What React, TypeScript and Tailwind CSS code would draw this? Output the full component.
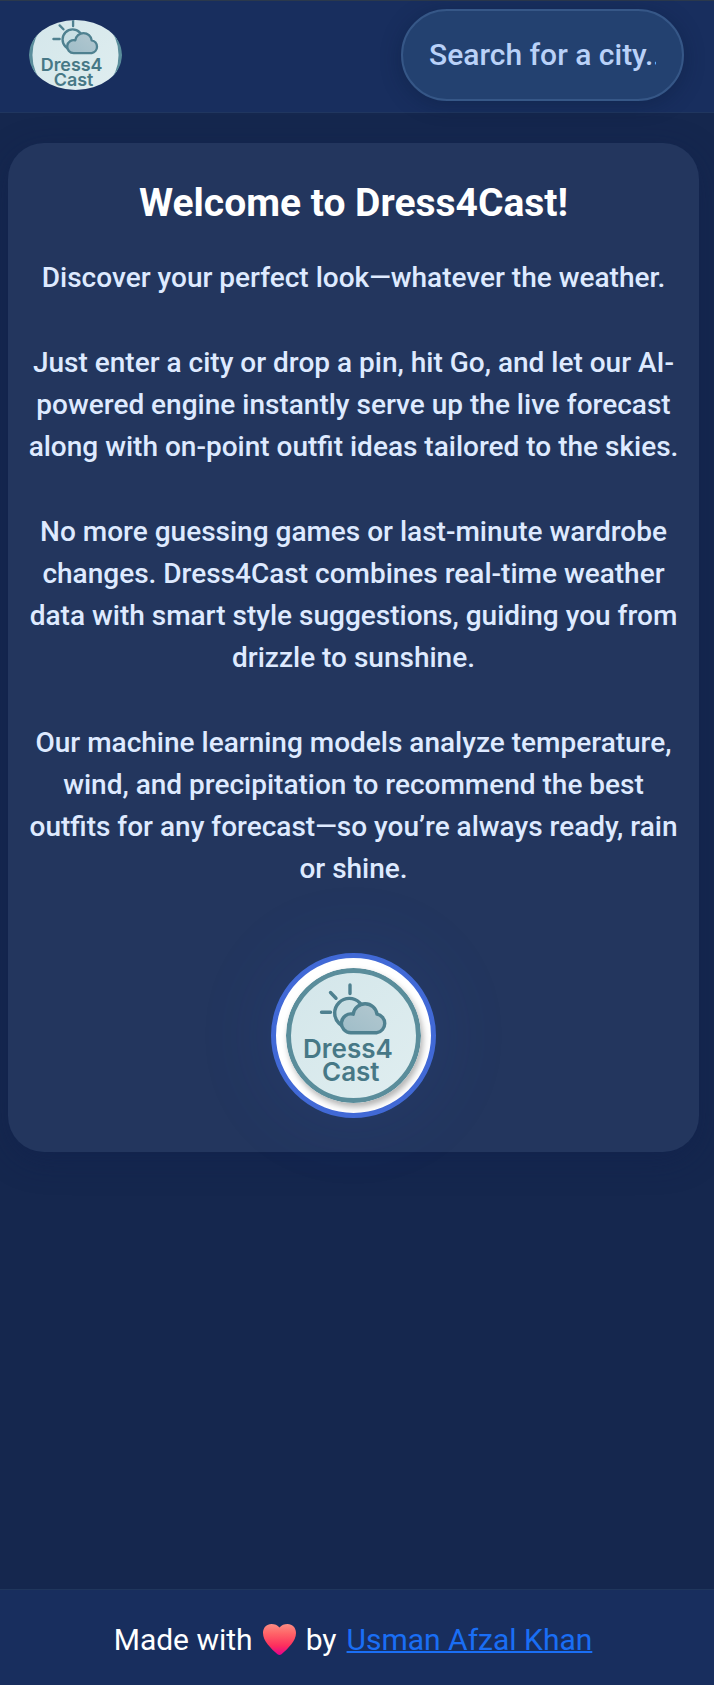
import { useId } from "react";

function Logo({ className }: { className: string }) {
  const id = useId();
  return (
    <svg viewBox="0 0 135 135" preserveAspectRatio="xMidYMid slice" className={className} role="img" aria-label="Dress4Cast">
      <defs>
        <linearGradient id={`${id}face`} x1="0" y1="0" x2="1" y2="1">
          <stop offset="0" stopColor="#d3e6ea" />
          <stop offset="1" stopColor="#e0eef0" />
        </linearGradient>
        <linearGradient id={`${id}cloud`} x1="0" y1="1" x2="1" y2="0">
          <stop offset="0" stopColor="#9fbdc8" />
          <stop offset="1" stopColor="#b3c8d0" />
        </linearGradient>
      </defs>
      <circle cx="67.5" cy="67.5" r="65" fill={`url(#${id}face)`} stroke="#5a8d9b" strokeWidth="5" />
      <g stroke="#4f8190" strokeWidth="3.4" strokeLinecap="round" strokeLinejoin="round">
        <path d="M64 17v8.500M44.500 24.500l5.500 5.700M35.500 44.300h9" fill="none" />
        <circle cx="63.300" cy="45" r="14.600" fill="#c9dfe4" />
        <path
          d="M65 64.700a9.400 9.400 0 1 1 2.200-18.500A12 12 0 0 1 91 46.200A9.400 9.400 0 0 1 91 64.700Z"
          fill={`url(#${id}cloud)`}
        />
      </g>
      <text fill="#477886" className="font-['Inter',sans-serif] text-[26px] font-semibold">
        <tspan x="17" y="90">
          Dress4
        </tspan>
        <tspan x="36" y="113">
          Cast
        </tspan>
      </text>
    </svg>
  );
}

function Heart() {
  const id = useId();
  return (
    <svg viewBox="0 0 33 31" className="h-[31px] w-[33px]" role="img" aria-label="love">
      <defs>
        <linearGradient id={id} x1="0" y1="0" x2="0" y2="1">
          <stop offset="0" stopColor="#fb8d84" />
          <stop offset="0.3" stopColor="#ff6568" />
          <stop offset="0.7" stopColor="#fd2f5d" />
          <stop offset="1" stopColor="#e6008f" />
        </linearGradient>
      </defs>
      <path
        d="M16.500 3.500C18.500 1 21.300 0 24.500 0C29.500 0 33 3.800 33 9C33 17 25 24.500 18.500 30.300Q16.500 31.700 14.500 30.300C8 24.500 0 17 0 9C0 3.800 3.500 0 8.500 0C11.700 0 14.500 1 16.500 3.500Z"
        fill={`url(#${id})`}
      />
    </svg>
  );
}

const paragraphs = [
  "Discover your perfect look—whatever the weather.",
  "Just enter a city or drop a pin, hit Go, and let our AI-powered engine instantly serve up the live forecast along with on-point outfit ideas tailored to the skies.",
  "No more guessing games or last-minute wardrobe changes. Dress4Cast combines real-time weather data with smart style suggestions, guiding you from drizzle to sunshine.",
  "Our machine learning models analyze temperature, wind, and precipitation to recommend the best outfits for any forecast—so you’re always ready, rain or shine.",
];

export default function App() {
  return (
    <div className="flex min-h-screen flex-col bg-[#15274e] font-['Roboto',sans-serif] text-white">
      <header className="flex items-center justify-between border-t border-b border-t-[#2b394c] border-b-[#20365f] bg-[#182e5e] pt-2 pr-[30px] pb-[11px] pl-[29px]">
        <a href="#home" aria-label="Dress4Cast home">
          <Logo className="h-[70px] w-[93px] rounded-[50%]" />
        </a>
        <input
          type="text"
          aria-label="Search for a city"
          placeholder="Search for a city..."
          className="h-[92px] w-[283px] rounded-full border-2 border-[#365787] bg-[#234170] px-[26px] pb-px text-[30px] font-medium text-white shadow-[0_4px_20px_rgba(10,25,55,0.35)] outline-none placeholder:text-[#b9d1f8]"
        />
      </header>

      <main className="grow pt-[30px] pr-[15px] pb-10 pl-2">
        <section className="flex flex-col items-center rounded-[36px] bg-[#23365e] px-4 pt-[38px] pb-[34px] text-center shadow-[0_8px_32px_rgba(15,30,75,0.4)]">
          <h1 className="text-[39px] leading-[44px] font-bold">Welcome to Dress4Cast!</h1>
          <div className="mt-8 flex flex-col gap-[43px] text-[28px] leading-[42px] font-medium text-[#deeaff]">
            {paragraphs.map((text) => (
              <p key={text}>{text}</p>
            ))}
          </div>
          <div className="mt-[63px] rounded-full border-[5px] border-[#4169d6] bg-white p-[10px] shadow-[0_0_80px_rgba(50,90,190,0.14)]">
            <Logo className="size-[135px] rounded-full shadow-[2px_4px_6px_rgba(0,0,0,0.3)]" />
          </div>
        </section>
      </main>

      <footer className="flex items-center justify-center gap-[10px] border-t border-[#20365c] bg-[#182e5e] pt-[30px] pr-2 pb-[26px] text-[30px] leading-[39px]">
        <span>Made with</span>
        <Heart />
        <span>by</span>
        <a href="#author" className="text-[#1a6ef5] underline decoration-2">
          Usman Afzal Khan
        </a>
      </footer>
    </div>
  );
}
